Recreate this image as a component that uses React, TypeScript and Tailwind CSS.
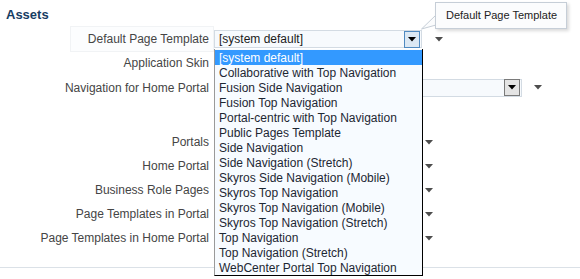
// Portal settings "Assets" panel, with the Default Page Template list opened
// and its hover tip showing.
import type { ReactElement } from 'react';

const TEMPLATES = [
  '[system default]',
  'Collaborative with Top Navigation',
  'Fusion Side Navigation',
  'Fusion Top Navigation',
  'Portal-centric with Top Navigation',
  'Public Pages Template',
  'Side Navigation',
  'Side Navigation (Stretch)',
  'Skyros Side Navigation (Mobile)',
  'Skyros Top Navigation',
  'Skyros Top Navigation (Mobile)',
  'Skyros Top Navigation (Stretch)',
  'Top Navigation',
  'Top Navigation (Stretch)',
  'WebCenter Portal Top Navigation',
];

const LABEL_CLASS = 'w-[214px] shrink-0 pr-[5px] text-right text-[12px] text-[#454545]';

function Caret({ className }: { className?: string }): ReactElement {
  return (
    <svg width="8" height="5" viewBox="0 0 8 5" className={className}>
      <path d="M0 0 H8 L4 4.5 Z" fill="#4d4d4d" />
    </svg>
  );
}

function SelectBox({
  value,
  width,
  focused,
}: {
  value: string;
  width: string;
  focused?: boolean;
}): ReactElement {
  return (
    <div
      className={`flex h-[18px] items-center justify-between border border-[#d3dbe3] bg-[#f7fafd] ${width}`}
    >
      <span className="pl-[4px] text-[12px] text-[#1c1c1c]">{value}</span>
      <span
        className={
          focused
            ? 'mr-px flex h-[17px] w-[16px] items-center justify-center border border-[#4f8ac1] bg-[#dbe8f4]'
            : 'mr-px flex h-[17px] w-[16px] items-center justify-center border border-[#7a7a7a] bg-[#e4e4e4]'
        }
      >
        <svg width="8" height="5" viewBox="0 0 8 5">
          <path d="M0 0 H8 L4 4.5 Z" fill="#000" />
        </svg>
      </span>
    </div>
  );
}

function Row({
  label,
  height,
  children,
}: {
  label: string;
  height: string;
  children?: React.ReactNode;
}): ReactElement {
  return (
    <div className={`flex items-center ${height}`}>
      <div className={LABEL_CLASS}>{label}</div>
      <div className="flex items-center">{children}</div>
    </div>
  );
}

export default function App(): ReactElement {
  return (
    <div className="relative h-[279px] w-[580px] overflow-hidden bg-white font-['Liberation_Sans',Arial,sans-serif]">
      <h2 className="pl-[6px] pt-[7px] text-[13px] font-bold leading-[16px] text-[#163d63]">
        Assets
      </h2>

      <div className="mt-[4px] flex flex-col">
        <div className="flex h-[24px] items-center">
          <div className="flex h-[26px] w-[214px] shrink-0 items-center justify-end pl-[70px]">
            <div className="flex h-full w-full items-center justify-end border border-[#f1f3f5] bg-[#fcfdfe] pr-[4px] text-[12px] text-[#454545]">
              Default Page Template
            </div>
          </div>
          <SelectBox value="[system default]" width="w-[208px]" focused />
          <Caret className="ml-[13px]" />
        </div>
        <Row label="Application Skin" height="h-[24px]">
          <SelectBox value="" width="w-[208px]" />
        </Row>
        <Row label="Navigation for Home Portal" height="h-[25px]">
          <SelectBox value="" width="w-[308px]" />
          <Caret className="ml-[12px]" />
        </Row>
        <div className="h-[30px]" />
        {[
          'Portals',
          'Home Portal',
          'Business Role Pages',
          'Page Templates in Portal',
          'Page Templates in Home Portal',
        ].map((label) => (
          <Row key={label} label={label} height="h-[24px]">
            <SelectBox value="" width="w-[200px]" />
            <Caret className="ml-[11px]" />
          </Row>
        ))}
      </div>

      <div className="mt-[17px] h-px w-full bg-[#dbe1e7]" />

      {/* open list of the Default Page Template choice */}
      <ul className="absolute left-[214px] top-[49px] w-[209px] border-b border-l border-r border-b-black border-l-[#9a9a9a] border-r-black bg-[#f7fbff] pt-px">
        {TEMPLATES.map((name, index) => (
          <li
            key={name}
            className={
              index === 0
                ? 'h-[15px] bg-[#3399ff] pl-[4px] text-[12px] leading-[17px] text-white'
                : 'h-[15px] pl-[4px] text-[12px] leading-[17px] text-[#1d2733]'
            }
          >
            {name}
          </li>
        ))}
      </ul>

      {/* hover tip */}
      <svg
        className="absolute left-[419px] top-[12px]"
        width="18"
        height="19"
        viewBox="0 0 18 19"
      >
        <path d="M17 3 L2.5 17 L17 13" fill="#fbfcfd" stroke="#c6ced7" strokeWidth="1" />
      </svg>
      <div className="absolute left-[435px] top-[2px] flex h-[27px] w-[132px] items-center border border-[#c6ced7] bg-[#fbfcfd] pl-[10px] text-[11px] text-[#222] shadow-[2px_2px_3px_rgba(0,0,0,0.15)]">
        Default Page Template
      </div>
    </div>
  );
}
